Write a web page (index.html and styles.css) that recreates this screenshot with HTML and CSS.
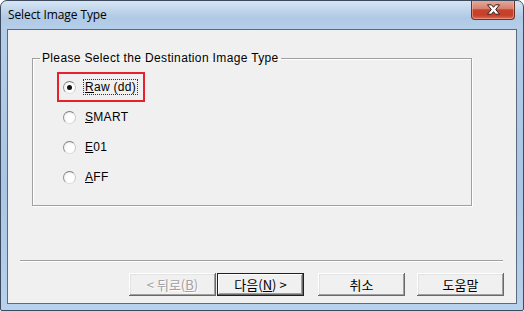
FILE: index.html
```html
<!DOCTYPE html>
<html>
<head>
<meta charset="utf-8">
<link rel="stylesheet" href="styles.css">
</head>
<body>
<div class="window">
  <div class="titlebar">
    <span class="title">Select Image Type</span>
    <span class="close">
      <svg width="17" height="11" viewBox="0 0 17 11">
        <path d="M2.5 0.8 L6.5 0.8 L8.5 3.3 L10.5 0.8 L14.5 0.8 L10.7 5.5 L14.5 10.2 L10.5 10.2 L8.5 7.7 L6.5 10.2 L2.5 10.2 L6.3 5.5 Z" fill="#ffffff" stroke="#3a1a14" stroke-width="1" stroke-linejoin="round"/>
      </svg>
    </span>
  </div>
  <div class="client">
    <fieldset class="group">
      <legend>Please Select the Destination Image Type</legend>
      <div class="opt marked"><span class="radio on"></span><span class="lbl focus"><u>R</u>aw (dd)</span></div>
      <div class="opt"><span class="radio"></span><span class="lbl"><u>S</u>MART</span></div>
      <div class="opt"><span class="radio"></span><span class="lbl"><u>E</u>01</span></div>
      <div class="opt"><span class="radio"></span><span class="lbl"><u>A</u>FF</span></div>
    </fieldset>
    <div class="spacer"></div>
    <div class="sep"></div>
    <div class="buttons">
      <button class="btn disabled">&lt; 뒤로(<u>B</u>)</button>
      <button class="btn default">다음(<u>N</u>) &gt;</button>
      <button class="btn cancel">취소</button>
      <button class="btn help">도움말</button>
    </div>
  </div>
</div>
</body>
</html>
```
FILE: styles.css
```css
html, body {
  margin: 0;
  padding: 0;
  background: #ffffff;
}
.window {
  width: 524px;
  height: 311px;
  box-sizing: border-box;
  border: 1px solid #3b4a5c;
  border-radius: 7px 7px 2px 2px;
  background: linear-gradient(to bottom, #c9dcf0 0px, #b3cde9 30px, #a9c6e6 60%, #b8d1ec 100%);
  display: flex;
  flex-direction: column;
  overflow: hidden;
  font-family: "Liberation Sans", "Noto Sans CJK KR", sans-serif;
  font-size: 12px;
  color: #000;
}
.titlebar {
  height: 28px;
  display: flex;
  justify-content: space-between;
  align-items: flex-start;
  padding-left: 7px;
  padding-right: 8px;
  background: linear-gradient(to bottom, rgba(255,255,255,0.25), rgba(150,180,215,0.35) 60%, rgba(255,255,255,0) );
}
.title {
  font-family: "Open Sans", "Noto Sans", sans-serif;
  font-size: 12px;
  line-height: 14px;
  margin-top: 7px;
  letter-spacing: -0.1px;
  color: #000;
}
.close {
  width: 44px;
  height: 20px;
  margin-top: -1px;
  box-sizing: border-box;
  border: 1px solid #6b3026;
  border-top: none;
  border-radius: 0 0 4px 4px;
  background: linear-gradient(to bottom, #e7aea1 0%, #d7806d 45%, #c5432c 52%, #c6402a 80%, #dc6a52 100%);
  box-shadow: inset 0 0 0 1px rgba(255,200,190,0.45);
  display: flex;
  align-items: center;
  justify-content: center;
}
.close svg { display: block; }
.client {
  flex: 1;
  margin: 0 6px 6px 6px;
  border: 1px solid #5b6b7d;
  background: #f0f0f0;
  display: flex;
  flex-direction: column;
  padding: 0;
}
.group {
  margin: 21px 44px 0 24px;
  padding: 7px 0 13px 24px;
  border: 1px solid #a0a0a0;
  box-shadow: inset 1px 1px 0 #ffffff, 1px 1px 0 #ffffff;
  min-width: 0;
}
.group legend {
  padding: 0 2px;
  margin-left: -17px;
  line-height: 14px;
  font-size: 12px;
  letter-spacing: 0.35px;
}
.opt {
  height: 26px;
  display: flex;
  align-items: center;
  border: 2px solid transparent;
  padding: 0 5px 0 4px;
  width: max-content;
}
.opt.marked {
  border-color: #e8202c;
}
.radio {
  width: 11px;
  height: 11px;
  border-radius: 50%;
  border: 1px solid #8a8a8a;
  border-color: #7e7e7e #c8c8c8 #dcdcdc #8e8e8e;
  background: radial-gradient(circle at 60% 60%, #ffffff 40%, #e6e6e6 100%);
  position: relative;
  flex: none;
}
.radio.on::after {
  content: "";
  position: absolute;
  left: 3px;
  top: 3px;
  width: 5px;
  height: 5px;
  border-radius: 50%;
  background: #111;
}
.lbl {
  margin-left: 7px;
  line-height: 14px;
  padding: 0 1px;
  border: 1px dotted transparent;
  letter-spacing: 0.3px;
}
.lbl.focus {
  border-color: #333;
}
.spacer { flex: 1; }
.sep {
  margin: 0 13px 0 12px;
  height: 1px;
  background: #a0a0a0;
  border-bottom: 1px solid #ffffff;
}
.buttons {
  display: flex;
  justify-content: flex-end;
  margin: 11px 12px 7px 0;
}
.btn {
  width: 87px;
  height: 23px;
  box-sizing: border-box;
  background: #f0f0f0;
  border: none;
  border-radius: 0;
  font-family: "Noto Sans CJK KR", "Liberation Sans", sans-serif;
  font-size: 13px;
  color: #000;
  padding: 0;
  box-shadow: inset -1px -1px 0 #696969, inset 1px 1px 0 #ffffff, inset -2px -2px 0 #a0a0a0, inset 2px 2px 0 #e3e3e3;
  line-height: 21px;
}
.btn.disabled {
  color: #a0a0a0;
  text-shadow: 1px 1px 0 #ffffff;
}
.btn.default {
  margin-left: 1px;
  box-shadow: inset 0 0 0 1px #202020, inset -2px -2px 0 #696969, inset 2px 2px 0 #ffffff, inset -3px -3px 0 #a0a0a0;
}
.btn.cancel { margin-left: 14px; }
.btn.help { margin-left: 12px; }
```
